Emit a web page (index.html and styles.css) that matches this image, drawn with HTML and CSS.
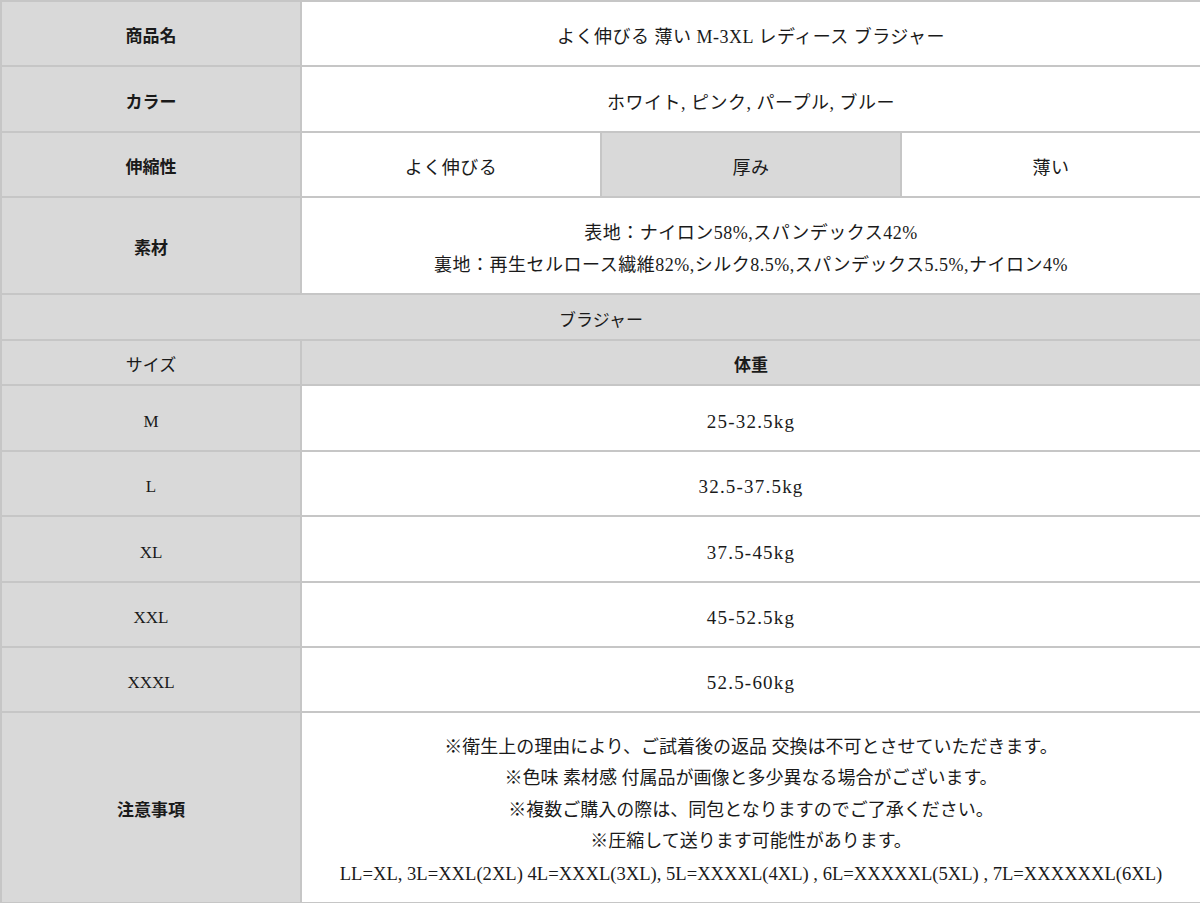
FILE: index.html
```html
<!DOCTYPE html>
<html lang="ja">
<head>
<meta charset="utf-8">
<link rel="stylesheet" href="styles.css">
</head>
<body>
<table class="spec">
  <colgroup><col class="c"><col class="c"><col class="c"><col class="c"></colgroup>
  <tr class="r65"><th>商品名</th><td colspan="3">よく伸びる 薄い M-3XL レディース ブラジャー</td></tr>
  <tr class="r66"><th>カラー</th><td colspan="3">ホワイト, ピンク, パープル, ブルー</td></tr>
  <tr class="r65"><th>伸縮性</th><td>よく伸びる</td><td class="hl">厚み</td><td>薄い</td></tr>
  <tr class="r97"><th>素材</th><td colspan="3" class="multi">表地：ナイロン58%,スパンデックス42%<br>裏地：再生セルロース繊維82%,シルク8.5%,スパンデックス5.5%,ナイロン4%</td></tr>
  <tr class="r46"><th colspan="4" class="plain">ブラジャー</th></tr>
  <tr class="r45"><th class="plain">サイズ</th><th colspan="3">体重</th></tr>
  <tr class="r66"><th class="plain">M</th><td colspan="3" class="num">25-32.5kg</td></tr>
  <tr class="r65"><th class="plain">L</th><td colspan="3" class="num">32.5-37.5kg</td></tr>
  <tr class="r66"><th class="plain">XL</th><td colspan="3" class="num">37.5-45kg</td></tr>
  <tr class="r65"><th class="plain">XXL</th><td colspan="3" class="num">45-52.5kg</td></tr>
  <tr class="r65"><th class="plain">XXXL</th><td colspan="3" class="num">52.5-60kg</td></tr>
  <tr class="r191"><th>注意事項</th><td colspan="3" class="notes">※衛生上の理由により、ご試着後の返品 交換は不可とさせていただきます。<br>※色味 素材感 付属品が画像と多少異なる場合がございます。<br>※複数ご購入の際は、同包となりますのでご了承ください。<br>※圧縮して送ります可能性があります。<br><span class="sizes">LL=XL, 3L=XXL(2XL) 4L=XXXL(3XL), 5L=XXXXL(4XL) , 6L=XXXXXL(5XL) , 7L=XXXXXXL(6XL)</span></td></tr>
</table>
</body>
</html>
```
FILE: styles.css
```css
html, body {
  margin: 0;
  padding: 0;
  background: #ffffff;
}
.spec {
  width: 1200px;
  border-collapse: collapse;
  table-layout: fixed;
  font-family: "Liberation Serif", "Noto Sans CJK JP", serif;
  font-size: 18px;
  color: #1a1a1a;
}
.spec .c { width: 300px; }
.spec th, .spec td {
  border: 2px solid #c6c6c6;
  text-align: center;
  vertical-align: middle;
  padding: 7px 4px 0;
  box-sizing: border-box;
  line-height: 32px;
}
.spec th {
  background: #d9d9d9;
  font-weight: bold;
  font-size: 17px;
}
.spec th.plain { font-weight: normal; }
.spec td { background: #ffffff; font-weight: normal; letter-spacing: 0.5px; }
.spec td.hl { background: #d9d9d9; }
.spec td.num { font-size: 19px; letter-spacing: 1.2px; }
.spec td.notes { line-height: 31.5px; letter-spacing: 0; }
.spec .sizes { font-size: 18.6px; }
.r65 { height: 65px; }
.r66 { height: 66px; }
.r97 { height: 97px; }
.r46 { height: 46px; }
.r45 { height: 45px; }
.r191 { height: 191px; }
```
